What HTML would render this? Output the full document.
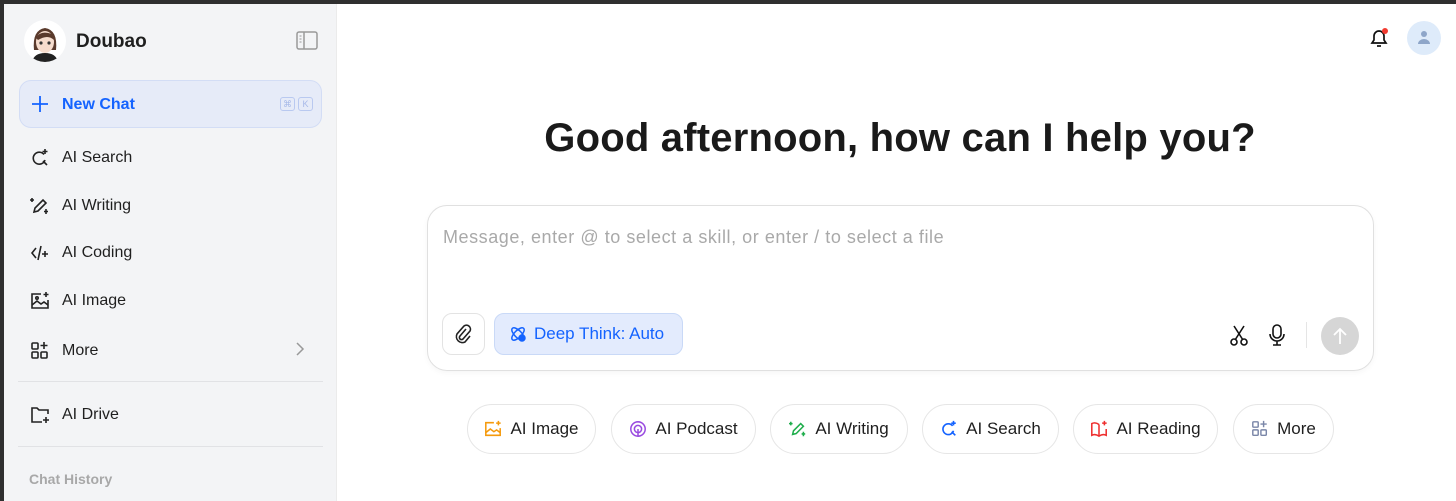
<!DOCTYPE html>
<html><head><meta charset="utf-8"><style>
*{box-sizing:border-box;margin:0;padding:0}
body{width:1456px;height:501px;overflow:hidden;background:#fff;font-family:"Liberation Sans",sans-serif;position:relative;color:#1f1f1f}
.topb{position:absolute;left:0;top:0;width:1456px;height:4px;background:#2f2f2f}
.leftb{position:absolute;left:0;top:0;width:4px;height:501px;background:#2f2f2f}
.side{position:absolute;left:4px;top:4px;width:333px;height:497px;background:#f3f4f6;border-right:1px solid #ebebeb}
.abs{position:absolute}
.item{position:absolute;left:30px;font-size:16px;color:#1f1f1f;display:flex;align-items:center}
.item svg{margin-right:12px}
.hr{position:absolute;left:18px;width:305px;height:1px;background:#e1e2e5}
.chip{position:absolute;top:404px;height:50px;border:1px solid #e6e6e6;border-radius:25px;display:flex;align-items:center;justify-content:center;font-size:17px;color:#1f1f1f;background:#fff}
.chip svg{margin-right:8px}
</style></head><body>
<div class="side"></div>
<div class="topb"></div><div class="leftb"></div>

<div class="abs" style="left:24px;top:20px;width:42px;height:42px;border-radius:50%;background:#fff;overflow:hidden">
<svg width="42" height="42" viewBox="0 0 42 42"><path d="M10 30 Q8 10 21 8 Q34 10 32 30 Z" fill="#5a3a2c"/><ellipse cx="21" cy="22" rx="9" ry="11" fill="#f6dccd"/><path d="M12 18 Q16 10 28 14 Q30 16 30 20 Q24 14 14 20Z" fill="#5a3a2c"/><circle cx="17" cy="23" r="1.6" fill="#333"/><circle cx="25" cy="23" r="1.6" fill="#333"/><path d="M8 42 Q10 33 21 33 Q32 33 34 42Z" fill="#222"/></svg></div>
<div class="abs" style="left:76px;top:31px;font-size:19px;font-weight:bold;color:#1f1f1f">Doubao</div>
<svg class="abs" style="left:296px;top:31px" width="22" height="19" viewBox="0 0 22 19"><rect x="1" y="1" width="20" height="17" rx="2" fill="none" stroke="#999" stroke-width="1.5"/><line x1="8" y1="1" x2="8" y2="18" stroke="#999" stroke-width="1.5"/><line x1="3.5" y1="5" x2="5.5" y2="5" stroke="#999"/><line x1="3.5" y1="8" x2="5.5" y2="8" stroke="#999"/><line x1="3.5" y1="11" x2="5.5" y2="11" stroke="#999"/></svg>

<div class="abs" style="left:19px;top:80px;width:303px;height:48px;border-radius:12px;background:#e6ebf8;border:1px solid #d3ddf5"></div>
<svg class="abs" style="left:32px;top:96px" width="16" height="16"><path d="M8 0v16M0 8h16" stroke="#1463ff" stroke-width="1.8"/></svg>
<div class="abs" style="left:62px;top:96px;font-size:16px;font-weight:bold;color:#1463ff">New Chat</div>
<div class="abs" style="left:280px;top:97px;width:15px;height:14px;border:1px solid #b9c9f0;border-radius:3px;font-size:9px;color:#a7b9e8;text-align:center;line-height:12px">⌘</div>
<div class="abs" style="left:298px;top:97px;width:15px;height:14px;border:1px solid #b9c9f0;border-radius:3px;font-size:9px;color:#a7b9e8;text-align:center;line-height:12px">K</div>

<div class="item" style="top:148px"><svg width="20" height="20" viewBox="0 0 20 20" fill="none" stroke="#222" stroke-width="1.6"><path d="M14 6.5A6 6 0 1 0 15 12"/><path d="M13 13l4 4"/><path d="M15 1v5M12.5 3.5h5"/></svg>AI Search</div>
<div class="item" style="top:196px"><svg width="20" height="20" viewBox="0 0 20 20" fill="none" stroke="#222" stroke-width="1.6"><path d="M4 16l1-4 8-8 3 3-8 8z"/><path d="M2 2v4M0 4h4M16 13v5M14 15.5h4"/></svg>AI Writing</div>
<div class="item" style="top:243px"><svg width="20" height="20" viewBox="0 0 20 20" fill="none" stroke="#222" stroke-width="1.6"><path d="M6 5L2 10l4 5M11 3l-3 14M15 8v6M12 11h6"/></svg>AI Coding</div>
<div class="item" style="top:291px"><svg width="20" height="20" viewBox="0 0 20 20" fill="none" stroke="#222" stroke-width="1.6"><path d="M11 3H2v14h16v-8"/><path d="M2 14l5-4 4 3 3-2 4 3"/><circle cx="7" cy="7" r="1.2"/><path d="M16 1v5M13.5 3.5h5"/></svg>AI Image</div>
<div class="item" style="top:341px"><svg width="20" height="20" viewBox="0 0 20 20" fill="none" stroke="#222" stroke-width="1.6"><rect x="2" y="2" width="6" height="6" rx="1"/><rect x="2" y="11" width="6" height="6" rx="1"/><rect x="11" y="11" width="6" height="6" rx="1"/><path d="M14 1v7M10.5 4.5h7"/></svg>More</div>
<svg class="abs" style="left:295px;top:341px" width="10" height="16"><path d="M2 2l6 6-6 6" fill="none" stroke="#999" stroke-width="1.5"/></svg>
<div class="hr" style="top:381px"></div>
<div class="item" style="top:405px"><svg width="20" height="20" viewBox="0 0 20 20" fill="none" stroke="#222" stroke-width="1.6"><path d="M18 9V5H9L7 3H2v14h10"/><path d="M16 12v6M13 15h6"/></svg>AI Drive</div>
<div class="hr" style="top:446px"></div>
<div class="abs" style="left:29px;top:471px;font-size:14px;font-weight:bold;color:#a8a8a8">Chat History</div>

<svg class="abs" style="left:1368px;top:27px" width="22" height="22" viewBox="0 0 22 22" fill="none" stroke="#111" stroke-width="1.7"><path d="M4 16h14l-2-3V9a5 5 0 0 0-10 0v4z"/><path d="M9 19h4"/><circle cx="17" cy="4" r="3" fill="#f23b30" stroke="none"/></svg>
<div class="abs" style="left:1407px;top:21px;width:34px;height:34px;border-radius:50%;background:#deebfa"></div>
<svg class="abs" style="left:1417px;top:30px" width="14" height="15"><circle cx="7" cy="4" r="3" fill="#8ea6c9"/><path d="M1 14a6 5 0 0 1 12 0z" fill="#8ea6c9"/></svg>

<div class="abs" style="left:480px;top:116px;width:840px;text-align:center;font-size:40px;font-weight:600;color:#1a1a1a;letter-spacing:0.2px">Good afternoon, how can I help you?</div>

<div class="abs" style="left:427px;top:205px;width:947px;height:166px;border:1px solid #e0e0e0;border-radius:20px;box-shadow:0 2px 6px rgba(0,0,0,0.04)"></div>
<div class="abs" style="left:443px;top:227px;font-size:18px;color:#a9a9a9;letter-spacing:0.55px">Message, enter @ to select a skill, or enter / to select a file</div>
<div class="abs" style="left:442px;top:313px;width:43px;height:42px;border:1px solid #e3e3e3;border-radius:10px"></div>
<svg class="abs" style="left:454px;top:324px" width="19" height="20" viewBox="0 0 19 20" fill="none" stroke="#222" stroke-width="1.6"><path d="M12 5l-6 7a2 2 0 0 0 3 3l7-8a4 4 0 0 0-6-5L3 10a6 6 0 0 0 8 8l5-6"/></svg>
<div class="abs" style="left:494px;top:313px;width:189px;height:42px;border:1px solid #c9d9f7;border-radius:10px;background:#e3ebfd"></div>
<svg class="abs" style="left:509px;top:325px" width="18" height="18" viewBox="0 0 18 18" fill="none" stroke="#1463ff" stroke-width="1.5"><ellipse cx="9" cy="9" rx="8" ry="3.5" transform="rotate(45 9 9)"/><ellipse cx="9" cy="9" rx="8" ry="3.5" transform="rotate(-45 9 9)"/><circle cx="13" cy="13" r="3" fill="#1463ff"/></svg>
<div class="abs" style="left:534px;top:324px;font-size:17px;color:#1463ff">Deep Think: Auto</div>
<svg class="abs" style="left:1229px;top:325px" width="20" height="21" viewBox="0 0 20 21" fill="none" stroke="#111" stroke-width="1.6"><path d="M5 1l9 14M15 1L6 15"/><circle cx="5" cy="17" r="3"/><circle cx="15" cy="17" r="3"/></svg>
<svg class="abs" style="left:1268px;top:324px" width="18" height="22" viewBox="0 0 18 22" fill="none" stroke="#111" stroke-width="1.6"><rect x="5" y="1" width="8" height="13" rx="4"/><path d="M2 10a7 7 0 0 0 14 0M9 17v4M5 21h8"/></svg>
<div class="abs" style="left:1306px;top:322px;width:1px;height:26px;background:#e5e5e5"></div>
<div class="abs" style="left:1321px;top:317px;width:38px;height:38px;border-radius:50%;background:#d6d6d6"></div>
<svg class="abs" style="left:1331px;top:326px" width="18" height="20"><path d="M9 18V3M3 9l6-6 6 6" fill="none" stroke="#fff" stroke-width="1.8"/></svg>

<div class="chip" style="left:467px;width:129px"><svg width="18" height="18" viewBox="0 0 20 20" fill="none" stroke="#f59a0c" stroke-width="1.7"><path d="M11 3H2v14h16v-8"/><path d="M2 14l5-4 4 3 3-2 4 3"/><path d="M16 1v5M13.5 3.5h5"/></svg>AI Image</div>
<div class="chip" style="left:611px;width:145px"><svg width="18" height="18" viewBox="0 0 20 20" fill="none" stroke="#9a4ce0" stroke-width="1.7"><circle cx="10" cy="10" r="8"/><circle cx="10" cy="10" r="4"/><path d="M10 10v8"/></svg>AI Podcast</div>
<div class="chip" style="left:770px;width:138px"><svg width="18" height="18" viewBox="0 0 20 20" fill="none" stroke="#1fae4c" stroke-width="1.7"><path d="M4 16l1-4 8-8 3 3-8 8z"/><path d="M2 2v4M0 4h4M16 13v5M14 15.5h4"/></svg>AI Writing</div>
<div class="chip" style="left:922px;width:137px"><svg width="18" height="18" viewBox="0 0 20 20" fill="none" stroke="#1463ff" stroke-width="1.8"><path d="M14 6.5A6 6 0 1 0 15 12"/><path d="M13 13l4 4"/><path d="M15 1v5M12.5 3.5h5"/></svg>AI Search</div>
<div class="chip" style="left:1073px;width:145px"><svg width="18" height="18" viewBox="0 0 20 20" fill="none" stroke="#ee2e2e" stroke-width="1.7"><path d="M10 5Q6 2 2 4v13q4-2 8 1 4-3 8-1V10"/><path d="M10 5v13M16 1v5M13.5 3.5h5"/></svg>AI Reading</div>
<div class="chip" style="left:1233px;width:101px"><svg width="18" height="18" viewBox="0 0 20 20" fill="none" stroke="#7a86a8" stroke-width="1.6"><rect x="2" y="2" width="6" height="6" rx="1"/><rect x="2" y="11" width="6" height="6" rx="1"/><rect x="11" y="11" width="6" height="6" rx="1"/><path d="M14 1v7M10.5 4.5h7"/></svg>More</div>
</body></html>
